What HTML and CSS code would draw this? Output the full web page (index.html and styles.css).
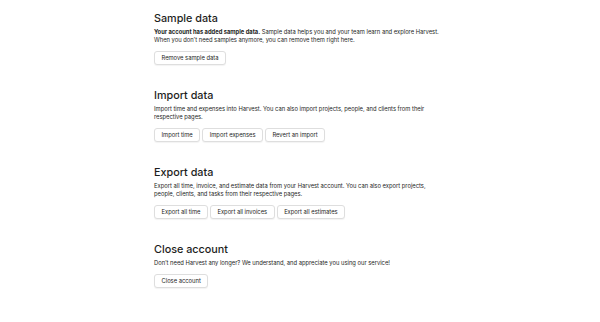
FILE: index.html
```html
<!DOCTYPE html>
<html>
<head>
<meta charset="utf-8"/>
<link rel="stylesheet" href="styles.css">
</head>
<body>
<div class="page">
	<section class="block">
		<h2>Sample data</h2>
		<p><strong>Your account has added sample data.</strong> Sample data helps you and your team learn and explore Harvest. When you don’t need samples anymore, you can remove them right here.</p>
		<div class="actions">
			<button class="btn">Remove sample data</button>
		</div>
	</section>
	<section class="block">
		<h2>Import data</h2>
		<p>Import time and expenses into Harvest. You can also import projects, people, and clients from their respective pages.</p>
		<div class="actions">
			<button class="btn">Import time</button>
			<button class="btn">Import expenses</button>
			<button class="btn">Revert an import</button>
		</div>
	</section>
	<section class="block">
		<h2>Export data</h2>
		<p>Export all time, invoice, and estimate data from your Harvest account. You can also export projects, people, clients, and tasks from their respective pages.</p>
		<div class="actions">
			<button class="btn">Export all time</button>
			<button class="btn">Export all invoices</button>
			<button class="btn">Export all estimates</button>
		</div>
	</section>
	<section class="block">
		<h2>Close account</h2>
		<p>Don’t need Harvest any longer? We understand, and appreciate you using our service!</p>
		<div class="actions">
			<button class="btn">Close account</button>
		</div>
	</section>
</div>
</body>
</html>
```
FILE: styles.css
```css
body{margin:0;background:#fff;color:#1d1e1c;font-family:Inter,"Noto Sans",sans-serif;}
.page{width:292px;padding:12px 0 0 154px;}

.block{margin-bottom:24px;}
.block h2{margin:0 0 2.5px;font-size:10.8px;font-weight:500;line-height:13px;}
.block p{margin:0 0 7px;font-size:5.8px;line-height:8.3px;}
.block p strong{font-weight:700;}

.actions{display:flex;gap:2px;}
.btn{font-family:inherit;font-size:5.8px;color:#1d1e1c;background:#fff;border:1px solid #dedede;border-radius:3px;padding:0 6.5px;height:14px;line-height:12px;box-shadow:0 1px 1px rgba(0,0,0,0.05);}
```
